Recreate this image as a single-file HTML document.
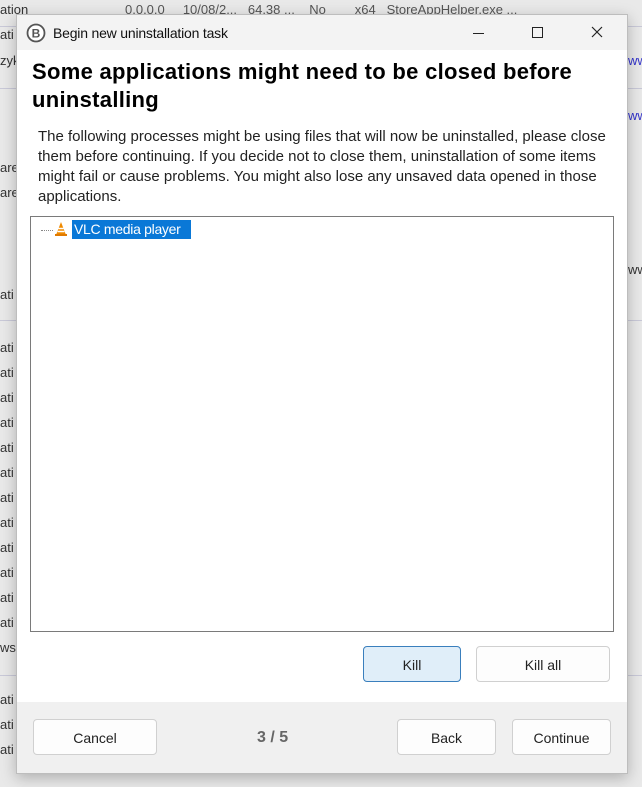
<!DOCTYPE html>
<html><head><style>
body{margin:0;width:642px;height:787px;background:#e9e9e9;position:relative;overflow:hidden;font-family:"Liberation Sans",sans-serif;}
.bg{position:absolute;font-size:13px;color:#333;left:0}
.dlg{position:absolute;left:16px;top:14px;width:610px;height:758px;background:#fff;border:1px solid #bdbdbd;box-shadow:0 4px 14px rgba(0,0,0,.25);}
.tb{position:absolute;left:0;top:0;width:610px;height:35px;background:#f3f3f3;}
.tt{position:absolute;left:36px;top:10px;font-size:14px;color:#111;letter-spacing:-0.2px}
.h{position:absolute;left:15px;top:43px;font-size:22px;font-weight:bold;line-height:28px;color:#000;letter-spacing:0.3px}
.p{position:absolute;left:21px;top:112px;font-size:15px;line-height:20px;color:#222;letter-spacing:0px;white-space:nowrap}
.box{position:absolute;left:13px;top:201px;width:582px;height:414px;border:1px solid #7a7a7a;background:#fff}
.btn{position:absolute;height:36px;border:1px solid #d0d0d0;border-radius:4px;background:#fdfdfd;font-size:14px;text-align:center;line-height:36px;color:#222;box-sizing:border-box}
.foot{position:absolute;left:0;top:687px;width:610px;height:71px;background:#f0f0f0}
</style></head><body>
<div class="bg" style="top:2px;left:0">ation</div>
<div class="bg" style="top:2px;left:125px;color:#555">0.0.0.0 &nbsp;&nbsp;&nbsp; 10/08/2... &nbsp;&nbsp;64.38 ... &nbsp;&nbsp;&nbsp;No &nbsp;&nbsp;&nbsp;&nbsp;&nbsp;&nbsp;&nbsp;x64 &nbsp; StoreAppHelper.exe ...</div>
<div style="position:absolute;left:0;top:26px;width:642px;height:1px;background:#c9c9d8"></div>
<div class="bg" style="top:27px">ati</div>
<div class="bg" style="top:53px">zyk</div>
<div class="bg" style="top:160px">are</div>
<div class="bg" style="top:185px">are</div>
<div class="bg" style="top:287px">ati</div>
<div class="bg" style="top:640px">ws</div>
<div style="position:absolute;left:0;top:88px;width:642px;height:1px;background:#c9c9d8"></div>
<div style="position:absolute;left:0;top:320px;width:642px;height:1px;background:#c9c9d8"></div>
<div style="position:absolute;left:0;top:675px;width:642px;height:1px;background:#c9c9d8"></div>
<div class="bg" style="top:340px">ati</div><div class="bg" style="top:365px">ati</div><div class="bg" style="top:390px">ati</div><div class="bg" style="top:415px">ati</div><div class="bg" style="top:440px">ati</div><div class="bg" style="top:465px">ati</div><div class="bg" style="top:490px">ati</div><div class="bg" style="top:515px">ati</div><div class="bg" style="top:540px">ati</div><div class="bg" style="top:565px">ati</div><div class="bg" style="top:590px">ati</div><div class="bg" style="top:615px">ati</div>
<div class="bg" style="top:692px">ati</div><div class="bg" style="top:717px">ati</div><div class="bg" style="top:742px">ati</div>
<div class="bg" style="top:53px;left:628px;color:#33c">ww</div>
<div class="bg" style="top:108px;left:628px;color:#33c">ww</div>
<div class="bg" style="top:262px;left:628px;color:#333">ww</div>
<div class="dlg">
 <div class="tb">
  <svg style="position:absolute;left:9px;top:8px" width="20" height="20" viewBox="0 0 20 20"><circle cx="10" cy="10" r="8.5" fill="#fff" stroke="#555" stroke-width="1.8"/><text x="10" y="14.5" font-size="12" font-weight="bold" text-anchor="middle" fill="#555" font-family="Liberation Sans">B</text></svg>
  <div class="tt">Begin new uninstallation task</div>
  <div style="position:absolute;left:456px;top:18px;width:11px;height:1px;background:#222"></div>
  <div style="position:absolute;left:515px;top:12px;width:9px;height:9px;border:1px solid #222"></div>
  <svg style="position:absolute;left:574px;top:11px" width="12" height="12"><path d="M1 1L11 11M11 1L1 11" stroke="#222" stroke-width="1.2"/></svg>
 </div>
 <div class="h">Some applications might need to be closed before<br>uninstalling</div>
 <div class="p">The following processes might be using files that will now be uninstalled, please close<br>them before continuing. If you decide not to close them, uninstallation of some items<br>might fail or cause problems. You might also lose any unsaved data opened in those<br>applications.</div>
 <div class="box">
  <div style="position:absolute;left:10px;top:13px;width:12px;border-top:1px dotted #888"></div>
  <svg style="position:absolute;left:22px;top:4px" width="16" height="16" viewBox="0 0 16 16"><path d="M8 1L13 14H3Z" fill="#f08a00"/><path d="M5.5 7.5h5M4.6 10.5h6.8" stroke="#fff" stroke-width="1.4"/><rect x="2" y="13" width="12" height="2" fill="#e07a00"/></svg>
  <div style="position:absolute;left:41px;top:3px;height:19px;width:119px;background:#0a78d7;color:#fff;font-size:14px;line-height:19px;padding-left:2px;box-sizing:border-box;letter-spacing:-0.3px">VLC media player</div>
 </div>
 <div class="btn" style="left:346px;top:631px;width:98px;background:#e0eef9;border-color:#3a7fbd">Kill</div>
 <div class="btn" style="left:459px;top:631px;width:134px">Kill all</div>
 <div class="foot">
  <div class="btn" style="left:16px;top:17px;width:124px">Cancel</div>
  <div style="position:absolute;left:240px;top:27px;font-size:16px;font-weight:bold;color:#666">3 / 5</div>
  <div class="btn" style="left:380px;top:17px;width:99px">Back</div>
  <div class="btn" style="left:495px;top:17px;width:99px">Continue</div>
 </div>
</div>
</body></html>
